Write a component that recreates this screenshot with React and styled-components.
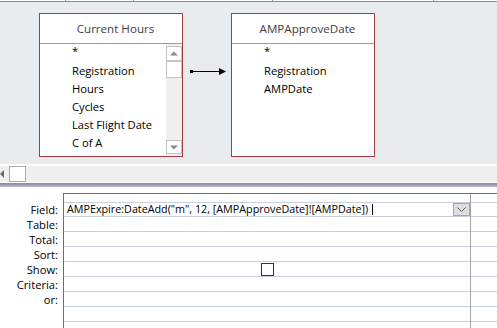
import React from 'react';
import styled, { createGlobalStyle } from 'styled-components';

const Global = createGlobalStyle`
  html, body { margin: 0; padding: 0; background: #fff; overflow: hidden; }
  body { font-family: "Open Sans", "Noto Sans", sans-serif; color: #000; }
  * { box-sizing: border-box; }
  #root { width: 497px; height: 328px; overflow: hidden; }
`;

const Screen = styled.div`
  width: 497px;
  height: 328px;
  display: flex;
  flex-direction: column;
  background: #fff;
  overflow: hidden;
`;

const Ruler = styled.div`
  display: flex;
  height: 1px;
  flex-shrink: 0;
  background: #fff;
`;

const RulerSeg = styled.div`
  width: ${(p) => p.$w}px;
  height: 1px;
  flex-shrink: 0;
  border-right: 1px solid #9a9a9a;
`;

const DesignPane = styled.div`
  height: 163px;
  flex-shrink: 0;
  border-top: 1px solid #8c8c8c;
  background: #e9ecef;
  display: flex;
  align-items: flex-start;
  padding: 11px 0 0 39px;
`;

const TableBox = styled.div`
  width: 144px;
  height: 144px;
  border: 1px solid #a8393e;
  background: #fff;
  display: flex;
  flex-direction: column;
  flex-shrink: 0;
`;

const TableTitle = styled.div`
  height: 30px;
  flex-shrink: 0;
  border-bottom: 1px solid #9c9c9c;
  display: flex;
  align-items: center;
  justify-content: center;
  padding-left: 9px;
  font-size: 11.6px;
  color: #404040;
`;

const TableBody = styled.div`
  flex: 1;
  display: flex;
  min-height: 0;
`;

const FieldList = styled.div`
  flex: 1;
  padding-left: 32px;
  display: flex;
  flex-direction: column;
`;

const FieldItem = styled.div`
  height: 18px;
  line-height: ${(p) => (p.$star ? '14px' : '18px')};
  font-size: 11.2px;
  white-space: nowrap;
`;

const VScroll = styled.div`
  width: 16px;
  flex-shrink: 0;
  background: #f0f0f0;
  display: flex;
  flex-direction: column;
  padding: 2px 0;
`;

const ScrollBtn = styled.div`
  height: ${(p) => p.$h}px;
  flex-shrink: 0;
  border: 1px solid #c4c4c4;
  background: #fff;
  display: flex;
  align-items: center;
  justify-content: center;
`;

const Spacer = styled.div`
  flex: 1;
`;

const Connector = styled.svg`
  width: 48px;
  height: 9px;
  margin-top: 54px;
  flex-shrink: 0;
`;

const HScroll = styled.div`
  height: 19px;
  flex-shrink: 0;
  border-top: 2px solid #fff;
  border-bottom: 1px solid #fff;
  background: #f0f0f0;
  display: flex;
  align-items: stretch;
`;

const HArrow = styled.div`
  width: 9px;
  display: flex;
  align-items: center;
`;

const HThumb = styled.div`
  width: 17px;
  border: 1px solid #acacac;
  background: #fff;
`;

const Splitter = styled.div`
  height: 4px;
  flex-shrink: 0;
  background: linear-gradient(#8a87a6, #b8b6cb);
`;

const GridPane = styled.div`
  flex: 1;
  display: flex;
  padding-top: 6px;
  background: #fff;
  min-height: 0;
`;

const LabelColumn = styled.div`
  width: 63px;
  flex-shrink: 0;
  display: flex;
  flex-direction: column;
  padding-top: 10px;
`;

const RowLabel = styled.div`
  height: ${(p) => p.$h}px;
  flex-shrink: 0;
  display: flex;
  align-items: center;
  justify-content: flex-end;
  padding-right: 5px;
  padding-bottom: 1px;
  font-size: 11.2px;
  white-space: nowrap;
`;

const GridArea = styled.div`
  flex: 1;
  display: flex;
  border-top: 1px solid #6f6f6f;
  border-left: 1px solid #6f6f6f;
`;

const Column = styled.div`
  width: ${(p) => (p.$w ? `${p.$w}px` : 'auto')};
  flex: ${(p) => (p.$w ? '0 0 auto' : '1')};
  display: flex;
  flex-direction: column;
  border-right: ${(p) => (p.$w ? '1px solid #a4a4a4' : 'none')};
`;

const Cell = styled.div`
  height: ${(p) => p.$h}px;
  flex-shrink: 0;
  border-bottom: 1px solid #c8d1de;
  display: flex;
  align-items: center;
  justify-content: ${(p) => (p.$center ? 'center' : 'flex-start')};
`;

const FieldText = styled.span`
  padding-left: 3px;
  font-size: 10.75px;
  white-space: nowrap;
  line-height: 13px;
`;

const Caret = styled.span`
  width: 1px;
  height: 11px;
  background: #000;
  margin-left: 4px;
  flex-shrink: 0;
`;

const DropButton = styled.div`
  margin-left: auto;
  width: 17px;
  height: 13px;
  align-self: flex-start;
  background: #dedede;
  border: 1px solid #a8a8a8;
  display: flex;
  align-items: center;
  justify-content: center;
`;

const CheckBox = styled.div`
  width: 13px;
  height: 13px;
  border: 1px solid #333;
  background: #fff;
  margin-top: 1px;
`;

const rows = ['Field:', 'Table:', 'Total:', 'Sort:', 'Show:', 'Criteria:', 'or:', '', ''];
const rowHeight = (i) => (i === 0 ? 14 : 15);

function TableCard({ title, fields, scroll }) {
  return (
    <TableBox>
      <TableTitle>{title}</TableTitle>
      <TableBody>
        <FieldList>
          {fields.map((f) => (
            <FieldItem key={f} $star={f === '*'}>{f}</FieldItem>
          ))}
        </FieldList>
        {scroll && (
          <VScroll>
            <ScrollBtn $h={15}>
              <svg width="8" height="5" viewBox="0 0 8 5"><path d="M0 4.5 L4 0.5 L8 4.5 Z" fill="#8a8a8a" /></svg>
            </ScrollBtn>
            <ScrollBtn $h={17} />
            <Spacer />
            <ScrollBtn $h={14}>
              <svg width="8" height="5" viewBox="0 0 8 5"><path d="M0 0.5 L4 4.5 L8 0.5 Z" fill="#8a8a8a" /></svg>
            </ScrollBtn>
          </VScroll>
        )}
      </TableBody>
    </TableBox>
  );
}

export default function App() {
  return (
    <Screen>
      <Global />
      <Ruler>
        <RulerSeg $w={66} />
        <RulerSeg $w={68} />
        <RulerSeg $w={139} />
        <RulerSeg $w={161} />
      </Ruler>
      <DesignPane>
        <TableCard
          title="Current Hours"
          fields={['*', 'Registration', 'Hours', 'Cycles', 'Last Flight Date', 'C of A']}
          scroll
        />
        <Connector viewBox="0 0 48 9">
          <rect x="7" y="3" width="3" height="3" fill="#000" />
          <line x1="8" y1="4.5" x2="38" y2="4.5" stroke="#000" strokeWidth="1" />
          <path d="M36 1 L43 4.5 L36 8 Z" fill="#000" />
        </Connector>
        <TableCard title="AMPApproveDate" fields={['*', 'Registration', 'AMPDate']} />
      </DesignPane>
      <HScroll>
        <HArrow>
          <svg width="4" height="8" viewBox="0 0 4 8"><path d="M0 4 L4 0 L4 8 Z" fill="#6a6a6a" /></svg>
        </HArrow>
        <HThumb />
      </HScroll>
      <Splitter />
      <GridPane>
        <LabelColumn>
          {rows.map((r, i) => (
            <RowLabel key={i} $h={rowHeight(i)}>{r}</RowLabel>
          ))}
        </LabelColumn>
        <GridArea>
          <Column $w={407}>
            <Cell $h={9} />
            {rows.map((r, i) => (
              <Cell key={i} $h={rowHeight(i)} $center={i === 4}>
                {i === 0 && (
                  <>
                    <FieldText>AMPExpire:DateAdd("m", 12, [AMPApproveDate]![AMPDate])</FieldText>
                    <Caret />
                    <DropButton>
                      <svg width="9" height="5" viewBox="0 0 9 5"><path d="M0.5 0.5 L4.5 4.5 L8.5 0.5" stroke="#555" strokeWidth="1" fill="none" /></svg>
                    </DropButton>
                  </>
                )}
                {i === 4 && <CheckBox />}
              </Cell>
            ))}
          </Column>
          <Column>
            <Cell $h={9} />
            {rows.map((r, i) => (
              <Cell key={i} $h={rowHeight(i)} />
            ))}
          </Column>
        </GridArea>
      </GridPane>
    </Screen>
  );
}
